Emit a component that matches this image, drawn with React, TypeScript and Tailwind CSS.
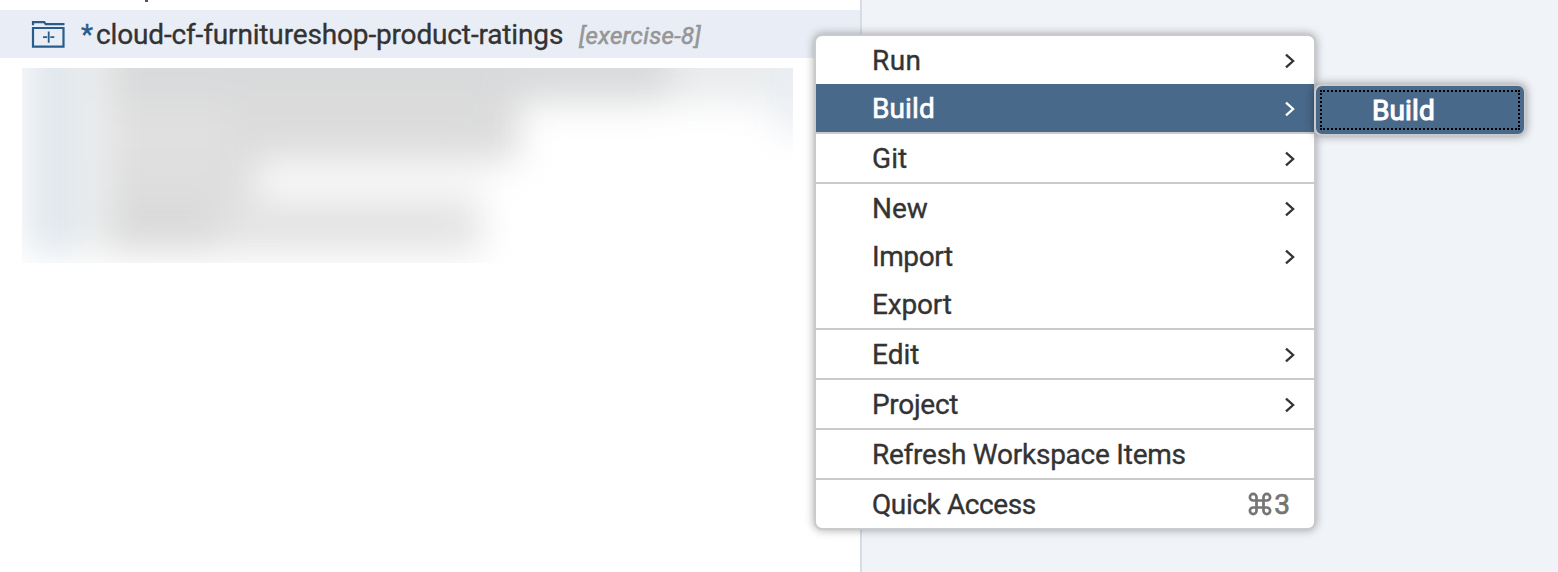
import React from "react";

type Item = {
  label: string;
  tracking: string;
  arrow?: boolean;
  active?: boolean;
  line?: boolean;
  shortcut?: boolean;
};

const items: Item[] = [
  { label: "Run", tracking: "tracking-[0.4px]", arrow: true },
  { label: "Build", tracking: "tracking-[0.1px]", arrow: true, active: true, line: true },
  { label: "Git", tracking: "tracking-[0.1px]", arrow: true, line: true },
  { label: "New", tracking: "tracking-[0px]", arrow: true },
  { label: "Import", tracking: "tracking-[-0.4px]", arrow: true },
  { label: "Export", tracking: "tracking-[-0.2px]", line: true },
  { label: "Edit", tracking: "tracking-[0px]", arrow: true, line: true },
  { label: "Project", tracking: "tracking-[-0.3px]", arrow: true, line: true },
  { label: "Refresh Workspace Items", tracking: "tracking-[-0.24px]", line: true },
  { label: "Quick Access", tracking: "tracking-[-0.4px]", shortcut: true },
];

function Chevron() {
  return (
    <svg className="mt-[2px]" width="13" height="16" viewBox="0 0 13 16" fill="none" stroke="currentColor" strokeWidth="2.3">
      <path d="M2 1.7 9.1 8 2 14.3" />
    </svg>
  );
}

function CommandIcon() {
  return (
    <svg width="24" height="24" viewBox="0 0 24 24" fill="none" stroke="currentColor" strokeWidth="2.7">
      <path d="M8.5 5.2a3.3 3.3 0 1 0-3.3 3.3h13.6a3.3 3.3 0 1 0-3.3-3.3v13.6a3.3 3.3 0 1 0 3.3-3.3H5.2a3.3 3.3 0 1 0 3.3 3.3z" />
    </svg>
  );
}

function FolderIcon() {
  return (
    <svg className="shrink-0" width="34" height="28" viewBox="0 0 34 28" fill="none" stroke="#285c8c" strokeWidth="2.2">
      <path d="M2 5.2V2.1h11.2l1.5 2.1h18.8" />
      <path d="M2 8h30.5v18.6H2z" />
      <path d="M17.7 11.5v11.2M12 17.2h4.2M19.3 17.2h4" strokeWidth="1.8" />
    </svg>
  );
}

function Row({ item }: { item: Item }) {
  return (
    <div className={item.line ? "border-b-2 border-[#cacaca]" : ""}>
      <div
        className={`flex h-12 items-center justify-between pl-14 pr-[17px] ${
          item.active ? "bg-[#49698a] text-white" : "text-[#333333]"
        }`}
      >
        <span
          className={`pt-[2px] ${item.tracking} ${
            item.active ? "[-webkit-text-stroke:0.7px_white]" : "[-webkit-text-stroke:0.35px_#333333]"
          }`}
        >
          {item.label}
        </span>
        {item.arrow && <Chevron />}
        {item.shortcut && (
          <span className="flex items-center gap-[2px] pr-[7px] text-[#757575]">
            <CommandIcon />
            <span className="pt-[2px] [-webkit-text-stroke:0.7px_#757575]">3</span>
          </span>
        )}
      </div>
    </div>
  );
}

function ObscuredTree() {
  return (
    <div className="ml-[22px] mt-[10px] h-[195px] w-[771px] overflow-hidden">
      <div className="-mt-10 flex h-[240px] items-start blur-[18px]">
        <div className="ml-1 h-[226px] w-[56px] shrink-0 bg-[#e1e7ed]" />
        <div className="h-[226px] w-[26px] shrink-0 bg-[#eff0f0]" />
        <div className="flex shrink-0 flex-col items-start">
          <div className="flex">
            <div className="h-[74px] w-[561px] bg-[#d9dadb]" />
            <div className="h-[74px] w-[105px] bg-[#e9ebec]" />
            <div className="-mb-[30px] h-[104px] w-[50px] bg-[#eaeef3]" />
          </div>
          <div className="flex">
            <div className="h-[58px] w-[120px] bg-[#e0e0e0]" />
            <div className="h-[58px] w-[291px] bg-[#dcdcdc]" />
          </div>
          <div className="flex">
            <div className="h-[40px] w-[148px] bg-[#dedede]" />
            <div className="h-[40px] w-[230px] bg-[#fafafa]" />
          </div>
          <div className="flex">
            <div className="h-[52px] w-[110px] bg-[#dadada]" />
            <div className="h-[52px] w-[263px] bg-[#e3e3e3]" />
          </div>
        </div>
      </div>
    </div>
  );
}

export default function App() {
  return (
    <div className="relative flex h-[572px] w-[1558px] overflow-hidden bg-white font-['Roboto',sans-serif] text-[28px] leading-none text-[#333333]">
      <div className="w-[860px] shrink-0">
        <div className="flex h-[10px] items-start pl-[145px]">
          <div className="h-[2px] w-[3px] bg-[#555555]" />
        </div>
        <div className="flex h-12 items-center bg-[#e9eef6] pl-[31px] pr-4">
          <FolderIcon />
          <span className="ml-4 w-[15px] shrink-0 pt-[2px] text-[#285c8c] [-webkit-text-stroke:0.4px_#285c8c]">*</span>
          <span className="w-[468px] shrink-0 whitespace-nowrap pt-[2px] tracking-[-0.15px] [-webkit-text-stroke:0.35px_#333333]">
            cloud-cf-furnitureshop-product-ratings
          </span>
          <span className="ml-[15px] whitespace-nowrap pt-[3px] text-[24px] italic tracking-[0.35px] text-[#969696] [-webkit-text-stroke:0.6px_#969696]">
            [exercise-8]
          </span>
        </div>
        <ObscuredTree />
      </div>
      <div className="flex-1 border-l-2 border-[#d9dce3] bg-[#f0f3f8]" />

      <div className="absolute left-[814px] top-[34px] w-[502px] overflow-hidden rounded-[8px] border-2 border-[#c9cacb] bg-white shadow-[0_0_10px_rgba(0,0,0,0.35)]">
        {items.map((item) => (
          <Row key={item.label} item={item} />
        ))}
      </div>

      <div className="absolute left-[1314px] top-[84px] h-[52px] w-[212px] rounded-[8px] border-2 border-[#c9cacb] bg-[#49698a] p-1 text-white shadow-[0_0_10px_rgba(0,0,0,0.4)]">
        <div className="flex h-full items-center border-2 border-dotted border-black pl-[50px]">
          <span className="pt-[2px] tracking-[0.1px] [-webkit-text-stroke:1.1px_white]">Build</span>
        </div>
      </div>
    </div>
  );
}
